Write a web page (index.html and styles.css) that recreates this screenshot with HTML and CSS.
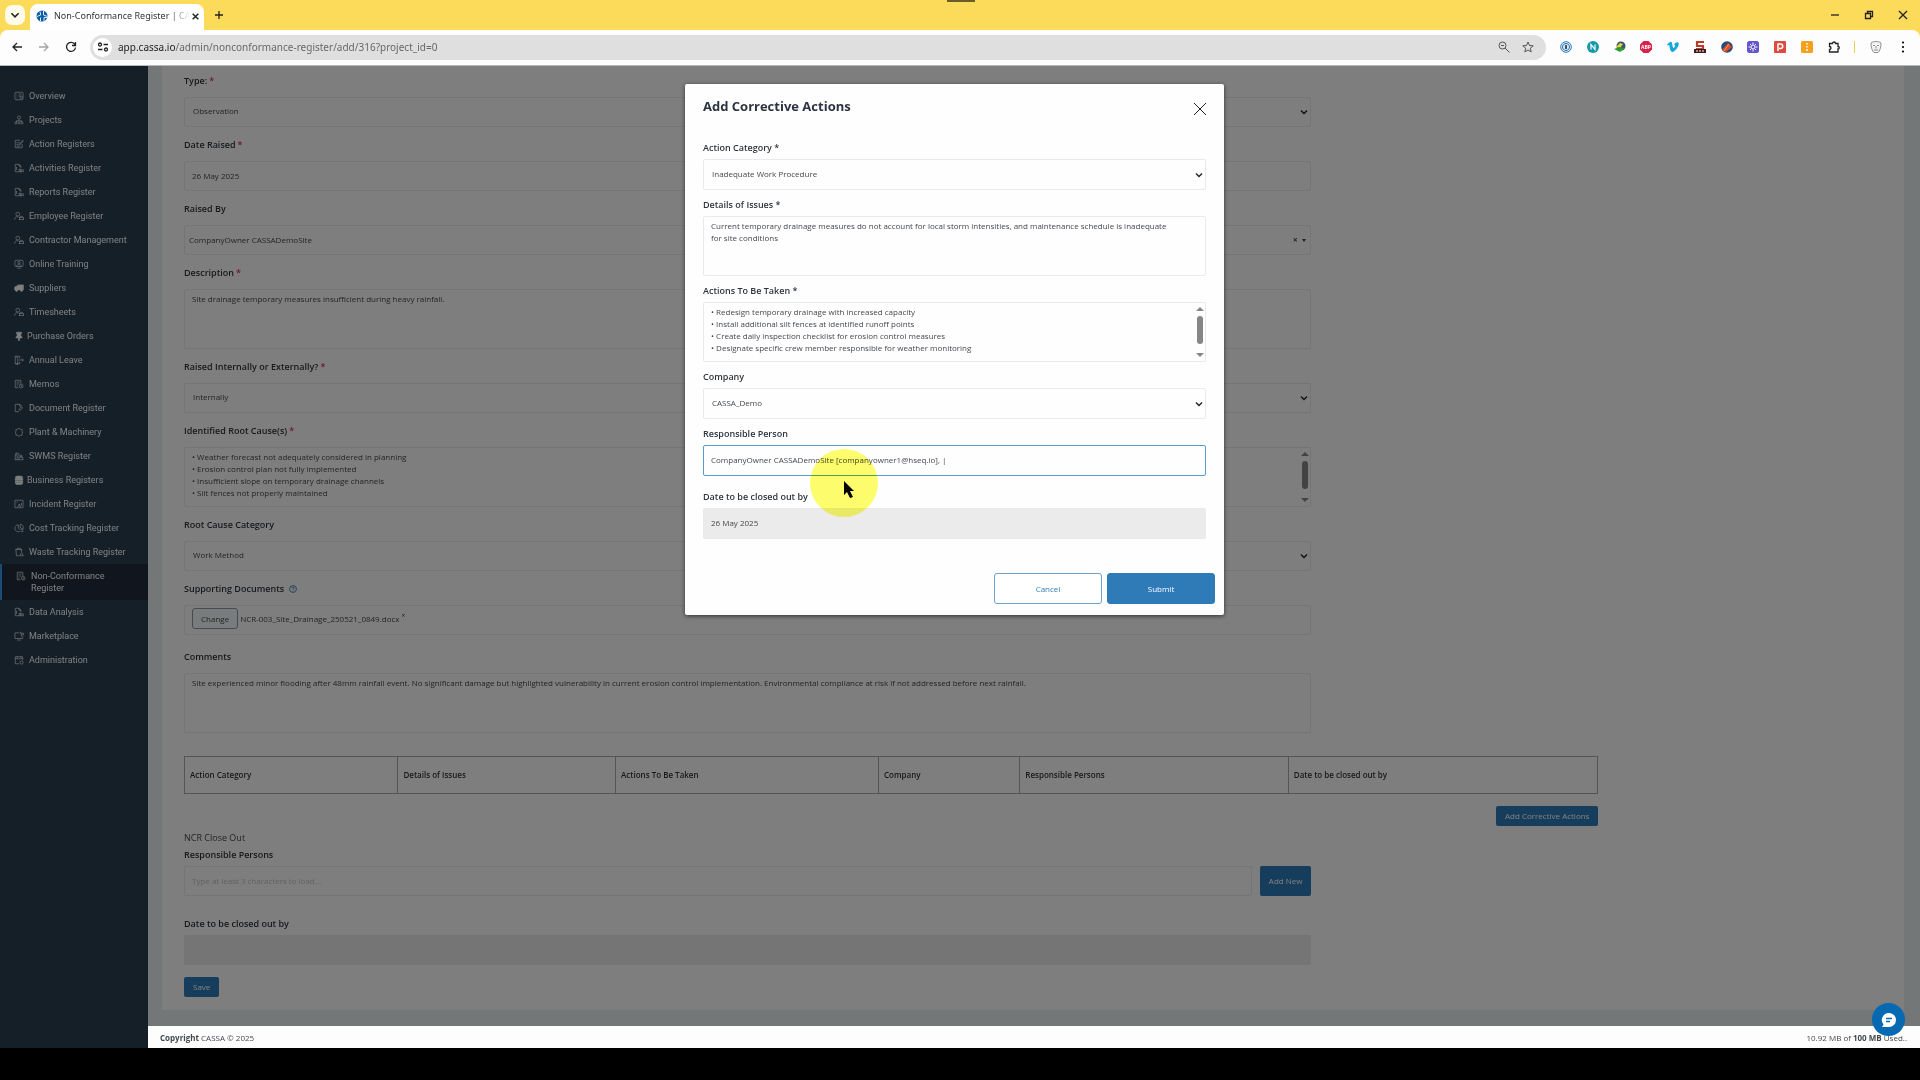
FILE: index.html
```
<!DOCTYPE html>
<html lang="en">

<head>
    <meta charset="utf-8">
    <meta name="viewport" content="width=device-width, initial-scale=1.0">
    <title>Non-Conformance Register | CASSA</title>
    <link rel="stylesheet" href="styles.css">
</head>

<body>
    <svg class="sprite" aria-hidden="true">
        <symbol id="i-overview" viewBox="0 0 16 16"><rect x="1.500" y="2" width="13" height="12" rx="1.500"/><path d="M4 5h1M7 5h5M4 8h1M7 8h3M4 11h1"/><circle cx="11.500" cy="10" r="2"/></symbol>
        <symbol id="i-projects" viewBox="0 0 16 16"><circle cx="8" cy="4" r="2.500"/><path d="M8 7v3M3 11l5-2 5 2M5 8l-2 3M11 8l2 3"/><circle cx="3" cy="13" r="1.500"/><circle cx="8" cy="13" r="1.500"/><circle cx="13" cy="13" r="1.500"/></symbol>
        <symbol id="i-edit" viewBox="0 0 16 16"><path d="M13 8v6H2V2h8M4 6h5M4 9h3M4 11.500h6M8 9l6-7 1 1-6 6.500z"/></symbol>
        <symbol id="i-doc" viewBox="0 0 16 16"><path d="M7 14H2V2h6l3 3v3M8 2v3h3M4 6v5"/><path d="M8 14v-4h3v4M11 14v-3h4v3M7 14h8"/></symbol>
        <symbol id="i-user" viewBox="0 0 16 16"><circle cx="6" cy="5" r="3"/><path d="M1 14c0-4 3-5.500 6-5"/><rect x="9" y="10" width="6" height="4"/><path d="M10.500 10V8.500h3V10"/></symbol>
        <symbol id="i-screen" viewBox="0 0 16 16"><rect x="1.500" y="2" width="13" height="10" rx="1.500"/><circle cx="8" cy="6" r="2"/><path d="M4 12c0-4 8-4 8 0M5 14.500h6"/></symbol>
        <symbol id="i-market" viewBox="0 0 16 16"><path d="M8 3H1.500v9H14V9M5 14.500h6M9 2h1.500l1 4.500H15l.5-3h-4.500"/><circle cx="12" cy="8" r=".5"/></symbol>
        <symbol id="i-admin" viewBox="0 0 16 16"><path d="M8 14H2V3h12v5M2 6h12M5 1.500V4M11 1.500V4"/><circle cx="12" cy="12" r="2.500"/></symbol>
        <symbol id="i-truck" viewBox="0 0 16 16"><path class="solid" d="M6 3h9v8H6zM1 7l2-2h3v6H1z"/><circle class="solid" cx="4" cy="12" r="1.500"/><circle class="solid" cx="12" cy="12" r="1.500"/></symbol>
        <symbol id="i-pin" viewBox="0 0 16 16"><path class="solid" d="M4 2h8v2h-1v4l2 2v1H9v4H7v-4H3v-1l2-2V4H4z"/></symbol>
        <symbol id="i-leave" viewBox="0 0 16 16"><path d="M9 5V2H2v12h7v-3M2 2l4 2v11l-4-1M8 8h7M12.500 5.500L15 8l-2.500 2.500"/></symbol>
        <symbol id="i-memo" viewBox="0 0 16 16"><path d="M7 14H2V2h9v6M4 5h5M4 8h4M4 11h2"/><circle cx="11.500" cy="11.500" r="3"/><path d="M11.500 10v2h1.500"/></symbol>
        <symbol id="i-file" viewBox="0 0 16 16"><path d="M8 14H2V2h7l3 3M9 2v3h3M9 12l5-4-2-2-4 4z"/></symbol>
        <symbol id="i-gear" viewBox="0 0 16 16"><path d="M8 2l2 1.500 3 .5v3l1 1-1 2v3l-3 .5L8 15l-2-1.500L3 13v-3L2 8l1-1V4l3-.5z"/></symbol>
        <symbol id="i-works" viewBox="0 0 16 16"><path d="M2 14V6h3v8M3 6V3l5 1v10M1 14h14M9 10h5v4"/><circle cx="11.500" cy="8" r="1.500"/></symbol>
        <symbol id="i-stack" viewBox="0 0 16 16"><ellipse class="solid" cx="8" cy="3.500" rx="6" ry="2"/><path class="solid" d="M2 5.500h12v2.500H2zM2 9h12v2.500H2zM2 12.500h12v1l-2 1.500H4l-2-1.500z"/></symbol>
        <symbol id="i-incident" viewBox="0 0 16 16"><path d="M5 14H1.500V2h13v12H12M4 5h2M8.500 8l-3 6h6zM8.500 10v2M12 6v5"/></symbol>
        <symbol id="i-pie" viewBox="0 0 16 16"><path d="M7 3a5.500 5.500 0 1 0 3 10M7 3v5l3 3M10 2v5l4 3a5 5 0 0 0-4-8zM11 10h3v4h-3"/></symbol>
        <symbol id="i-waste" viewBox="0 0 16 16"><path d="M2 4h11M5 4V2h5v2M3 4l1 10h4M12 4v4M12 9l-3 5h6z"/></symbol>
    </svg>

    <header class="browser">
        <div class="tabs">
            <button class="tab-search" type="button" aria-label="Search tabs"><svg viewBox="0 0 10 10"><path d="M2 3.500l3 3 3-3"/></svg></button>
            <div class="tab">
                <svg class="favicon" viewBox="0 0 12 12"><circle cx="6" cy="6" r="5.500" fill="#0d5ca5"/><path d="M4 1.500l.7 3.500L1 6.500M7.500 1v4l4 1.500M4.500 11V7.500M8 11V7.500H11" stroke="#d9ecfa" fill="none"/></svg>
                <span class="tab-title">Non-Conformance Register | CA</span>
                <button class="tab-close" type="button" aria-label="Close tab"><svg viewBox="0 0 8 8"><path d="M1.500 1.500l5 5M6.500 1.500l-5 5"/></svg></button>
            </div>
            <button class="new-tab" type="button" aria-label="New tab"><svg viewBox="0 0 8 8"><path d="M4 0v8M0 4h8"/></svg></button>
            <div class="window-buttons">
                <button type="button" aria-label="Minimise"><svg viewBox="0 0 10 10"><path d="M1 5h8"/></svg></button>
                <button type="button" aria-label="Restore"><svg viewBox="0 0 10 10"><path d="M1.500 3.500h5v5h-5zM3.500 3.500v-2h5v5h-2"/></svg></button>
                <button type="button" aria-label="Close"><svg viewBox="0 0 10 10"><path d="M1 1l8 8M9 1l-8 8"/></svg></button>
            </div>
        </div>
        <div class="toolbar">
            <div class="nav-buttons">
                <button type="button" aria-label="Back"><svg viewBox="0 0 12 12"><path d="M11 6H2M6 2L2 6l4 4"/></svg></button>
                <button type="button" aria-label="Forward" disabled><svg viewBox="0 0 12 12"><path d="M1 6h9M6 2l4 4-4 4"/></svg></button>
                <button type="button" aria-label="Reload"><svg viewBox="0 0 12 12"><path d="M10.500 6.500A4.500 4.500 0 1 1 9.500 3L10.500 4.500M10.500 1v3.500H7"/></svg></button>
            </div>
            <div class="omnibox">
                <span class="site-info"><svg viewBox="0 0 12 12"><circle cx="3" cy="3.500" r="1.500"/><path d="M6.500 3.500H11M1 8.500h4.500"/><circle cx="9" cy="8.500" r="1.500"/></svg></span>
                <span class="url"><b>app.cassa.io</b>/admin/nonconformance-register/add/316?project_id=0</span>
                <svg class="omni-icon" viewBox="0 0 12 12"><circle cx="4.500" cy="4.500" r="3.500"/><path d="M7 7l4.500 4.500M3 4.500h3"/></svg>
                <svg class="omni-icon" viewBox="0 0 12 12"><path d="M6 1l1.500 3.500 3.700.3-2.900 2.400.9 3.700L6 9l-3.200 1.900.9-3.700L.8 4.800l3.700-.3z"/></svg>
            </div>
            <div class="extensions">
                <svg viewBox="0 0 12 12"><circle cx="6" cy="6" r="5.300" fill="#fff" stroke="#2b74b8"/><circle cx="6" cy="6" r="3.600" fill="#d7e8f7" stroke="#2b74b8"/><path d="M6 4v4" stroke="#123" stroke-width="1.500"/></svg>
                <svg viewBox="0 0 12 12"><circle cx="6" cy="6" r="6" fill="#149aa6"/><path d="M4 8.500v-5l4 5v-5" fill="none" stroke="#fff" stroke-width="1.200"/></svg>
                <svg viewBox="0 0 12 12"><circle cx="7" cy="5" r="4.500" fill="#37536b"/><path d="M2 6l4-4 3 1-3 4z" fill="#e8d33a"/><path d="M0 8l6-2 5 1-5 4z" fill="#2b9a34"/></svg>
                <svg viewBox="0 0 12 12"><path d="M3.500 0h5L12 3.500v5L8.500 12h-5L0 8.500v-5z" fill="#d8224b"/><text x="6" y="8" class="abp">ABP</text></svg>
                <svg viewBox="0 0 12 12"><path d="M0 3.500L3 1c2-.8 2 1 2.500 3.500S6.500 8 7.500 6 8.500 3.500 7 4c.8-3 5-4 4.700-.8C11.500 6 7.500 11 5.500 11S3 8 2.500 5.500 1.500 4.500.7 4.500z" fill="#16a7dc"/></svg>
                <svg viewBox="0 0 12 12"><path d="M10 1H3v4h6v3H2" fill="none" stroke="#c03a2b" stroke-width="2.200"/><path d="M0 8h12v4H0z" fill="#3a1d1a"/><path d="M2 10h2M5 10h2M8 10h2" stroke="#fff"/></svg>
                <svg viewBox="0 0 12 12"><circle cx="6" cy="6" r="5.800" fill="#254b78"/><path d="M1 9l6-7 4 4-6 5z" fill="#e5482d"/><path d="M3 10l5-7" stroke="#f4a32a"/></svg>
                <svg viewBox="0 0 12 12"><rect width="12" height="12" rx="2.500" fill="#6554cf"/><circle cx="6" cy="6" r="2" fill="none" stroke="#fff"/><path d="M6 1.500v2M6 8.500v2M1.500 6h2M8.500 6h2M3 3l1 1M8 8l1 1M9 3L8 4M4 8L3 9" stroke="#fff"/></svg>
                <svg viewBox="0 0 12 12"><rect width="12" height="12" rx="1" fill="#df4a3f"/><path d="M4 10V3h2.500a2 2 0 0 1 0 4.500H5" fill="none" stroke="#fff" stroke-width="1.500"/></svg>
                <svg viewBox="0 0 12 12"><rect width="12" height="12" rx="1.500" fill="#f6a11d"/><path d="M6 2v1.500M6 5v1.500M6 8v2" stroke="#fff" stroke-width="1.500"/></svg>
                <svg viewBox="0 0 12 12"><path d="M1.500 2.500h3a1.200 1.200 0 0 1 3 0h2.500v3a1.200 1.200 0 0 1 0 2.500v3H1.500V8.500a1.500 1.500 0 0 0 0-3z" fill="none" stroke="#222" stroke-width="1.300"/></svg>
                <i class="divider"></i>
                <svg viewBox="0 0 12 12"><path d="M1 2c2-2 8-2 10 0 0 4-1 8-3 9.500H4C2 10 1 6 1 2zM3 4.500h2M7 4.500h2M6 5v2.500M4 9h4" fill="#f3f3f3" stroke="#666" stroke-width=".7"/></svg>
                <svg viewBox="0 0 12 12"><circle cx="6" cy="1.500" r="1.100"/><circle cx="6" cy="6" r="1.100"/><circle cx="6" cy="10.500" r="1.100"/></svg>
            </div>
        </div>
        <div class="recorder-handle"></div>
    </header>

    <div class="app">
        <nav class="sidebar">
            <a href="#"><svg><use href="#i-overview"/></svg>Overview</a>
            <a href="#"><svg><use href="#i-projects"/></svg>Projects</a>
            <a href="#"><svg><use href="#i-edit"/></svg>Action Registers</a>
            <a href="#"><svg><use href="#i-doc"/></svg>Activities Register</a>
            <a href="#"><svg><use href="#i-doc"/></svg>Reports Register</a>
            <a href="#"><svg><use href="#i-user"/></svg>Employee Register</a>
            <a href="#"><svg><use href="#i-user"/></svg>Contractor Management</a>
            <a href="#"><svg><use href="#i-screen"/></svg>Online Training</a>
            <a href="#"><svg><use href="#i-truck"/></svg>Suppliers</a>
            <a href="#"><svg><use href="#i-user"/></svg>Timesheets</a>
            <a href="#" class="tight"><svg><use href="#i-pin"/></svg>Purchase Orders</a>
            <a href="#"><svg><use href="#i-leave"/></svg>Annual Leave</a>
            <a href="#"><svg><use href="#i-memo"/></svg>Memos</a>
            <a href="#"><svg><use href="#i-file"/></svg>Document Register</a>
            <a href="#"><svg><use href="#i-gear"/></svg>Plant &amp; Machinery</a>
            <a href="#"><svg><use href="#i-works"/></svg>SWMS Register</a>
            <a href="#" class="tight"><svg><use href="#i-stack"/></svg>Business Registers</a>
            <a href="#"><svg><use href="#i-incident"/></svg>Incident Register</a>
            <a href="#"><svg><use href="#i-pie"/></svg>Cost Tracking Register</a>
            <a href="#"><svg><use href="#i-waste"/></svg>Waste Tracking Register</a>
            <a href="#" class="active"><svg><use href="#i-memo"/></svg><span>Non-Conformance<br>Register</span></a>
            <a href="#"><svg><use href="#i-doc"/></svg>Data Analysis</a>
            <a href="#"><svg><use href="#i-market"/></svg>Marketplace</a>
            <a href="#"><svg><use href="#i-admin"/></svg>Administration</a>
        </nav>

        <div class="page">
            <main class="content">
                <form class="panel">
                    <div class="fields">
                        <div class="field">
                            <label for="type">Type: <em>*</em></label>
                            <select id="type"><option>Observation</option></select>
                        </div>
                        <div class="field">
                            <label for="raised">Date Raised <em>*</em></label>
                            <input type="text" id="raised" value="26 May 2025">
                        </div>
                        <div class="field">
                            <label for="by">Raised By</label>
                            <button type="button" id="by" class="combo"><span>CompanyOwner CASSADemoSite</span><b>×</b><i></i></button>
                        </div>
                        <div class="field">
                            <label for="desc">Description <em>*</em></label>
                            <textarea id="desc">Site drainage temporary measures insufficient during heavy rainfall.</textarea>
                        </div>
                        <div class="field">
                            <label for="intext">Raised Internally or Externally? <em>*</em></label>
                            <select id="intext"><option>Internally</option></select>
                        </div>
                        <div class="field">
                            <label for="cause">Identified Root Cause(s) <em>*</em></label>
                            <textarea id="cause">• Weather forecast not adequately considered in planning
• Erosion control plan not fully implemented
• Insufficient slope on temporary drainage channels
• Silt fences not properly maintained</textarea>
                            <svg class="scrollbar" viewBox="0 0 12 58"><path d="M6 4l4 4H2zM6 54l4-4H2z"/><rect x="3" y="13" width="6" height="28" rx="3"/></svg>
                        </div>
                        <div class="field">
                            <label for="cat">Root Cause Category</label>
                            <select id="cat"><option>Work Method</option></select>
                        </div>
                        <div class="field">
                            <label for="docs">Supporting Documents
                                <svg class="help" viewBox="0 0 10 10"><circle cx="5" cy="5" r="4.300"/><path d="M3.500 4c0-2 3-2 3 0 0 1-1.500 1-1.500 2M5 7v1"/></svg>
                            </label>
                            <div class="upload"><button type="button" id="docs">Change</button><span>NCR-003_Site_Drainage_250521_0849.docx</span><sup>×</sup></div>
                        </div>
                        <div class="field comments">
                            <label for="comments">Comments</label>
                            <textarea id="comments">Site experienced minor flooding after 48mm rainfall event. No significant damage but highlighted vulnerability in current erosion control implementation. Environmental compliance at risk if not addressed before next rainfall.</textarea>
                        </div>
                    </div>

                    <div class="actions">
                        <table>
                            <thead>
                                <tr>
                                    <th class="w-cat">Action Category</th>
                                    <th class="w-issues">Details of Issues</th>
                                    <th class="w-taken">Actions To Be Taken</th>
                                    <th class="w-company">Company</th>
                                    <th class="w-persons">Responsible Persons</th>
                                    <th>Date to be closed out by</th>
                                </tr>
                            </thead>
                        </table>
                        <button type="button" class="btn">Add Corrective Actions</button>
                    </div>

                    <div class="fields close-out">
                        <h2>NCR Close Out</h2>
                        <label for="persons">Responsible Persons</label>
                        <div class="add-row">
                            <input type="text" id="persons" placeholder="Type at least 3 characters to load...">
                            <button type="button" class="btn">Add New</button>
                        </div>
                        <label for="closed">Date to be closed out by</label>
                        <input type="text" id="closed" disabled>
                        <button type="submit" class="btn">Save</button>
                    </div>
                </form>
            </main>

            <footer class="footer">
                <span><b>Copyright</b> CASSA © 2025</span>
                <span>10.92 MB of <b>100 MB</b> Used..</span>
                <button type="button" class="chat" aria-label="Open chat"><svg viewBox="0 0 16 16"><path class="bubble" d="M8 1a7 7 0 0 1 0 14H1l1.500-2.500A7 7 0 0 1 8 1z"/><path class="lines" d="M5 6.500h6M5 9.500h4"/></svg></button>
            </footer>
        </div>

        <div class="backdrop">
            <form class="modal" role="dialog" aria-labelledby="modal-title">
                <div class="modal-header">
                    <h1 id="modal-title">Add Corrective Actions</h1>
                    <button type="button" aria-label="Close"><svg viewBox="0 0 12 12"><path d="M0 0l12 12M12 0L0 12"/></svg></button>
                </div>
                <div class="field">
                    <label for="m-cat">Action Category *</label>
                    <select id="m-cat"><option>Inadequate Work Procedure</option></select>
                </div>
                <div class="field">
                    <label for="m-issues">Details of Issues *</label>
                    <textarea id="m-issues">Current temporary drainage measures do not account for local storm intensities, and maintenance schedule is inadequate
for site conditions</textarea>
                </div>
                <div class="field">
                    <label for="m-taken">Actions To Be Taken *</label>
                    <textarea id="m-taken">• Redesign temporary drainage with increased capacity
• Install additional silt fences at identified runoff points
• Create daily inspection checklist for erosion control measures
• Designate specific crew member responsible for weather monitoring</textarea>
                    <svg class="scrollbar" viewBox="0 0 12 58"><path d="M6 4l4 4H2zM6 54l4-4H2z"/><rect x="3" y="13" width="6" height="28" rx="3"/></svg>
                </div>
                <div class="field">
                    <label for="m-company">Company</label>
                    <select id="m-company"><option>CASSA_Demo</option></select>
                </div>
                <div class="field person">
                    <label for="m-person">Responsible Person</label>
                    <input type="text" id="m-person" class="focused" value="CompanyOwner CASSADemoSite [companyowner1@hseq.io], |">
                    <svg class="pointer" viewBox="0 0 68 68"><circle cx="34" cy="34" r="34"/><path d="M34 32v14l3-3 3 6 3-1-3-6h4z"/></svg>
                </div>
                <div class="field">
                    <label for="m-date">Date to be closed out by</label>
                    <input type="text" id="m-date" value="26 May 2025" disabled>
                </div>
                <div class="modal-footer">
                    <button type="button" class="cancel">Cancel</button>
                    <button type="submit" class="submit">Submit</button>
                </div>
            </form>
        </div>
    </div>
</body>

</html>
```
FILE: styles.css
```
* {
    box-sizing: border-box;
}

body {
    display: flex;
    flex-direction: column;
    min-height: 100vh;
    margin: 0;
    padding-bottom: 32px;
    background-color: #000;
    color: #44484d;
    font-family: "Open Sans", sans-serif;
    font-size: 8px;
    line-height: 12px;
}

button, input, select, textarea {
    margin: 0;
    font: inherit;
    color: inherit;
}

svg {
    flex: none;
}

.sprite {
    display: none;
}

/* browser window */
.browser {
    position: relative;
    background-color: #fcdb5b;
}

.browser button {
    display: flex;
    align-items: center;
    justify-content: center;
    padding: 0;
    border: none;
    background: none;
}

.browser svg {
    width: 12px;
    height: 12px;
}

.browser button svg, .omnibox svg {
    fill: none;
    stroke: #222;
    stroke-width: 1.3;
}

.tabs {
    display: flex;
    align-items: center;
    height: 30px;
    padding: 0 0 0 5px;
}

.browser .tab-search {
    width: 20px;
    height: 20px;
    border-radius: 7px;
    background-color: #fffbea;
}

.tab {
    display: flex;
    align-items: center;
    align-self: flex-end;
    width: 174px;
    height: 26px;
    margin-left: 5px;
    padding: 0 9px 2px 6px;
    border-radius: 8px 8px 0 0;
    background-color: #fff;
}

.tab-title {
    flex: 1;
    margin: 0 1px 0 6px;
    color: #333;
    font-family: "Noto Sans", sans-serif;
    font-size: 9px;
    white-space: nowrap;
    -webkit-mask-image: linear-gradient(to right, #000 85%, transparent);
    mask-image: linear-gradient(to right, #000 85%, transparent);
}

.browser .tab-close svg {
    width: 9px;
    height: 9px;
}

.new-tab {
    margin-left: 11px;
}

.browser .new-tab svg {
    width: 8px;
    height: 8px;
}

.window-buttons {
    display: flex;
    margin-left: auto;
}

.window-buttons button {
    width: 34px;
}

.browser .window-buttons svg {
    width: 10px;
    height: 10px;
}

.toolbar {
    display: flex;
    align-items: center;
    height: 36px;
    padding: 0 6px 1px 3px;
    border-bottom: 1px solid #b9bab9;
    border-radius: 8px 8px 0 0;
    background-color: #fdfdfd;
}

.nav-buttons {
    display: flex;
    width: 87px;
}

.nav-buttons button {
    width: 27px;
}

.nav-buttons button:disabled {
    opacity: .4;
}

.omnibox {
    display: flex;
    flex: 1;
    align-items: center;
    gap: 12px;
    height: 25px;
    padding: 0 12px 0 3px;
    border-radius: 13px;
    background-color: #dfdfdf;
}

.site-info {
    display: flex;
    align-items: center;
    justify-content: center;
    width: 19px;
    height: 19px;
    border-radius: 50%;
    background-color: #fff;
}

.url {
    flex: 1;
    margin-left: -6px;
    color: #686868;
    font-family: "Noto Sans", sans-serif;
    font-size: 10px;
}

.url b {
    color: #222;
    font-weight: 400;
}

.omnibox .omni-icon {
    stroke: #555;
    stroke-width: 1;
}

.extensions {
    display: flex;
    align-items: center;
    justify-content: space-between;
    width: 354px;
    margin-left: 14px;
    padding-right: 5px;
}

.abp {
    fill: #fff;
    font-size: 5px;
    font-weight: 700;
    text-anchor: middle;
}

.divider {
    width: 1px;
    height: 12px;
    background-color: #e6d24a;
}

.recorder-handle {
    position: absolute;
    top: 0;
    left: 50%;
    width: 28px;
    height: 2px;
    margin-left: -13px;
    background-color: #6b5d27;
}

/* application */
.app {
    position: relative;
    display: flex;
    flex: 1;
}

.sidebar {
    width: 148px;
    padding-top: 18px;
    background-color: #283e50;
    color: #fff;
    font-family: Roboto, sans-serif;
    font-size: 9px;
}

.sidebar a {
    display: flex;
    gap: 5px;
    padding: 6px 0 6px 14px;
    color: inherit;
    text-decoration: none;
}

.sidebar .tight {
    gap: 3px;
}

.sidebar .active {
    border-left: 2px solid #3498f0;
    background-color: #222b3c;
}

.sidebar svg {
    width: 10px;
    height: 10px;
    margin-top: 1px;
    fill: none;
    stroke: #fff;
}

.solid {
    fill: #fff;
}

.page {
    display: flex;
    flex: 1;
    flex-direction: column;
    background-color: #e8eff1;
}

.content {
    flex: 1;
    padding: 0 16px 16px 14px;
}

.panel {
    padding: 7px 22px 13px;
    background-color: #fcfcfc;
}

.fields {
    width: 66.4%;
}

.field {
    display: flex;
    position: relative;
    flex-direction: column;
    gap: 8px;
    margin-bottom: 10px;
}

label {
    display: flex;
    align-items: center;
    gap: 2px;
    height: 16px;
    color: #2f353b;
    font-size: 9px;
    font-weight: 600;
}

label em {
    color: #e0304e;
    font-style: normal;
}

input, select, textarea, .combo, .upload {
    display: block;
    width: 100%;
    height: 30px;
    padding: 0 7px 2px;
    border: 1px solid #e9eaeb;
    border-radius: 2px;
    background-color: transparent;
    outline: none;
}

select {
    padding: 0 8px 2px;
    appearance: none;
    background-image: url("data:image/svg+xml,%3Csvg xmlns='http://www.w3.org/2000/svg' viewBox='0 0 8 8'%3E%3Cpath d='M1 2.5l3 3 3-3' fill='none' stroke='%23222' stroke-width='1.4'/%3E%3C/svg%3E");
    background-position: right 2px center;
    background-repeat: no-repeat;
    background-size: 8px 8px;
}

textarea {
    height: 60px;
    padding: 3px 7px;
    resize: none;
    overflow: hidden;
}

input:disabled {
    background-color: #ebebeb;
    color: #44484d;
}

input::placeholder {
    color: #c4c4c4;
}

.combo {
    display: flex;
    align-items: center;
    gap: 5px;
    padding: 0 4px;
    text-align: left;
}

.combo span {
    flex: 1;
}

.combo i {
    border: 2px solid transparent;
    border-top: 3px solid #444;
    border-bottom: none;
}

.scrollbar {
    position: absolute;
    right: 0;
    bottom: 1px;
    width: 12px;
    height: 58px;
    fill: #868686;
}

.help {
    width: 8px;
    height: 8px;
    margin-left: 3px;
    fill: none;
    stroke: #2c72b5;
}

.upload {
    display: flex;
    align-items: center;
    gap: 2px;
    padding-bottom: 3px;
}

.upload button {
    height: 21px;
    padding: 0 8px;
    border: 1px solid #8298ab;
    border-radius: 3px;
    background-color: #f3f8fa;
}

.upload sup {
    line-height: 8px;
    margin-bottom: 6px;
}

.comments {
    margin: 14px 0 23px;
}

.actions {
    display: flex;
    flex-direction: column;
    align-items: flex-end;
    gap: 12px;
    width: 83.3%;
}

table {
    width: 100%;
    border-collapse: collapse;
    table-layout: fixed;
}

th {
    height: 37px;
    padding: 0 5px;
    border: 1px solid #aaa;
    color: #2f353b;
    font-weight: 600;
    text-align: left;
}

.w-cat {
    width: 15.1%;
}

.w-issues {
    width: 15.4%;
}

.w-taken {
    width: 18.6%;
}

.w-company {
    width: 10%;
}

.w-persons {
    width: 19%;
}

.btn {
    height: 20px;
    padding: 0 9px;
    border: none;
    border-radius: 2px;
    background-color: #2f7bb8;
    color: #fff;
    white-space: nowrap;
}

.close-out h2 {
    margin: 4px 0 1px;
    font-size: 9px;
    font-weight: 400;
    line-height: 16px;
}

.close-out label {
    margin-bottom: 3px;
}

.add-row {
    display: flex;
    gap: 8px;
    margin-bottom: 20px;
}

.add-row .btn {
    flex: none;
    height: 30px;
}

.close-out > .btn {
    margin-top: 12px;
}

/* modal */
.backdrop {
    position: absolute;
    inset: 0;
    display: flex;
    align-items: flex-start;
    justify-content: center;
    padding: 18px 11px 0 0;
    background-color: rgba(0, 0, 0, .5);
}

.modal {
    width: 100%;
    max-width: 539px;
    padding: 12px 18px 11px;
    border-radius: 2px;
    background-color: #fefefe;
    box-shadow: 0 1px 4px rgba(0, 0, 0, .6);
}

.modal-header {
    display: flex;
    align-items: flex-start;
    justify-content: space-between;
    margin-bottom: 24px;
}

.modal-header h1 {
    margin: 0;
    color: #2b3542;
    font-size: 13px;
    font-weight: 700;
    line-height: 20px;
}

.modal-header button {
    padding: 7px 0 0;
    border: none;
    background: none;
}

.modal-header svg {
    display: block;
    width: 12px;
    height: 12px;
    stroke: #222;
}

.modal .field {
    gap: 3px;
    margin-bottom: 7px;
}

.modal input, .modal select {
    height: 31px;
}

.modal .person {
    margin-bottom: 13px;
}

.modal .focused {
    border-color: #5b9bd0;
}

.pointer {
    position: absolute;
    top: 23px;
    left: 107px;
    width: 68px;
    height: 68px;
    mix-blend-mode: multiply;
    z-index: 1;
}

.pointer circle {
    fill: #fdfd6c;
}

.modal-footer {
    display: flex;
    justify-content: flex-end;
    gap: 5px;
    margin: 34px -9px 0 0;
}

.modal-footer button {
    width: 108px;
    height: 31px;
    border: 1px solid #2f7bb8;
    border-radius: 3px;
}

.modal-footer .cancel {
    border-color: #6fa3cf;
    background-color: #fff;
    color: #2f7bb8;
}

.modal-footer .submit {
    background-color: #2f7bb8;
    color: #fff;
}

/* footer stays above the dimmed backdrop */
.footer {
    position: relative;
    z-index: 1;
    display: flex;
    justify-content: space-between;
    padding: 6px 13px 4px 12px;
    background-color: #fdfdfd;
}

.chat {
    position: absolute;
    right: 15px;
    bottom: 12px;
    display: flex;
    align-items: center;
    justify-content: center;
    width: 33px;
    height: 33px;
    padding: 0;
    border: none;
    border-radius: 50%;
    background-color: #0669b2;
}

.chat svg {
    width: 16px;
    height: 16px;
}

.bubble {
    fill: #fff;
}

.lines {
    stroke: #0669b2;
    stroke-width: 1.5;
}
```
